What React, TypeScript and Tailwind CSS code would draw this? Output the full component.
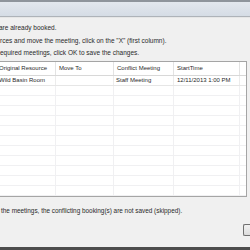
import React from "react";

const rows = Array.from({ length: 11 });

export default function App() {
  return (
    <div
      className="w-[250px] h-[250px] overflow-hidden bg-[#f0f0f0] flex flex-col text-[6px] text-[#2a2a2a]"
      style={{ fontFamily: '"Liberation Sans", Arial, sans-serif' }}
    >
      <div className="h-[2px] bg-[#8f959c] shrink-0" />
      <div className="h-[14px] bg-gradient-to-b from-[#e3e8ee] to-[#d5dce5] shrink-0" />
      <div className="h-px bg-[#aeb3b9] shrink-0" />
      <div className="h-px bg-[#e6e6e6] shrink-0" />
      <div className="flex flex-col pt-[4px] leading-[12.5px] whitespace-nowrap text-[6.5px]">
        <div className="-ml-[1px]">are already booked.</div>
        <div>rces and move the meeting, click on the "X" (first column).</div>
        <div>equired meetings, click OK to save the changes.</div>
      </div>
      <div className="mt-[1px] w-[247px] h-[136px] bg-white border-t border-r border-b border-[#a5a5a5] flex flex-col shrink-0">
        <div className="flex h-[14px] border-b border-[#d8d8d8] whitespace-nowrap">
          <div className="w-[57px] border-r border-[#e3e3e3] flex items-center -ml-[1px]">Original Resource</div>
          <div className="w-[58px] border-r border-[#e3e3e3] flex items-center pl-[3px]">Move To</div>
          <div className="w-[60px] border-r border-[#e3e3e3] flex items-center pl-[3px]">Conflict Meeting</div>
          <div className="w-[66px] border-r border-[#e3e3e3] flex items-center pl-[3px]">StartTime</div>
        </div>
        <div className="flex h-[10px] border-b border-[#e6e6e6] whitespace-nowrap">
          <div className="w-[57px] border-r border-[#ececec] flex items-center -ml-[1px]">Wild Basin Room</div>
          <div className="w-[58px] border-r border-[#ececec]" />
          <div className="w-[60px] border-r border-[#ececec] flex items-center pl-[2px]">Staff Meeting</div>
          <div className="w-[66px] border-r border-[#ececec] flex items-center pl-[3px]">12/11/2013 1:00 PM</div>
        </div>
        {rows.map((_, i) => (
          <div key={i} className="flex h-[10px] border-b border-[#f0f0f2]">
            <div className="w-[56px] border-r border-[#f0f0f2]" />
            <div className="w-[58px] border-r border-[#f0f0f2]" />
            <div className="w-[60px] border-r border-[#f0f0f2]" />
            <div className="w-[66px] border-r border-[#f0f0f2]" />
          </div>
        ))}
      </div>
      <div className="pt-[8px] pl-[1px] whitespace-nowrap leading-[12px] text-[6.4px]">
        the meetings, the conflicting booking(s) are not saved (skipped).
      </div>
      <div className="flex justify-end mt-[7px] h-[12px]">
        <div className="w-[7px] h-[12px] border border-r-0 border-[#707070] rounded-l-[2px] bg-gradient-to-b from-[#f2f2f2] to-[#dcdcdc]" />
      </div>
      <div className="flex-1" />
      <div className="h-[3px] bg-[#4d4d4d] shrink-0" />
    </div>
  );
}
